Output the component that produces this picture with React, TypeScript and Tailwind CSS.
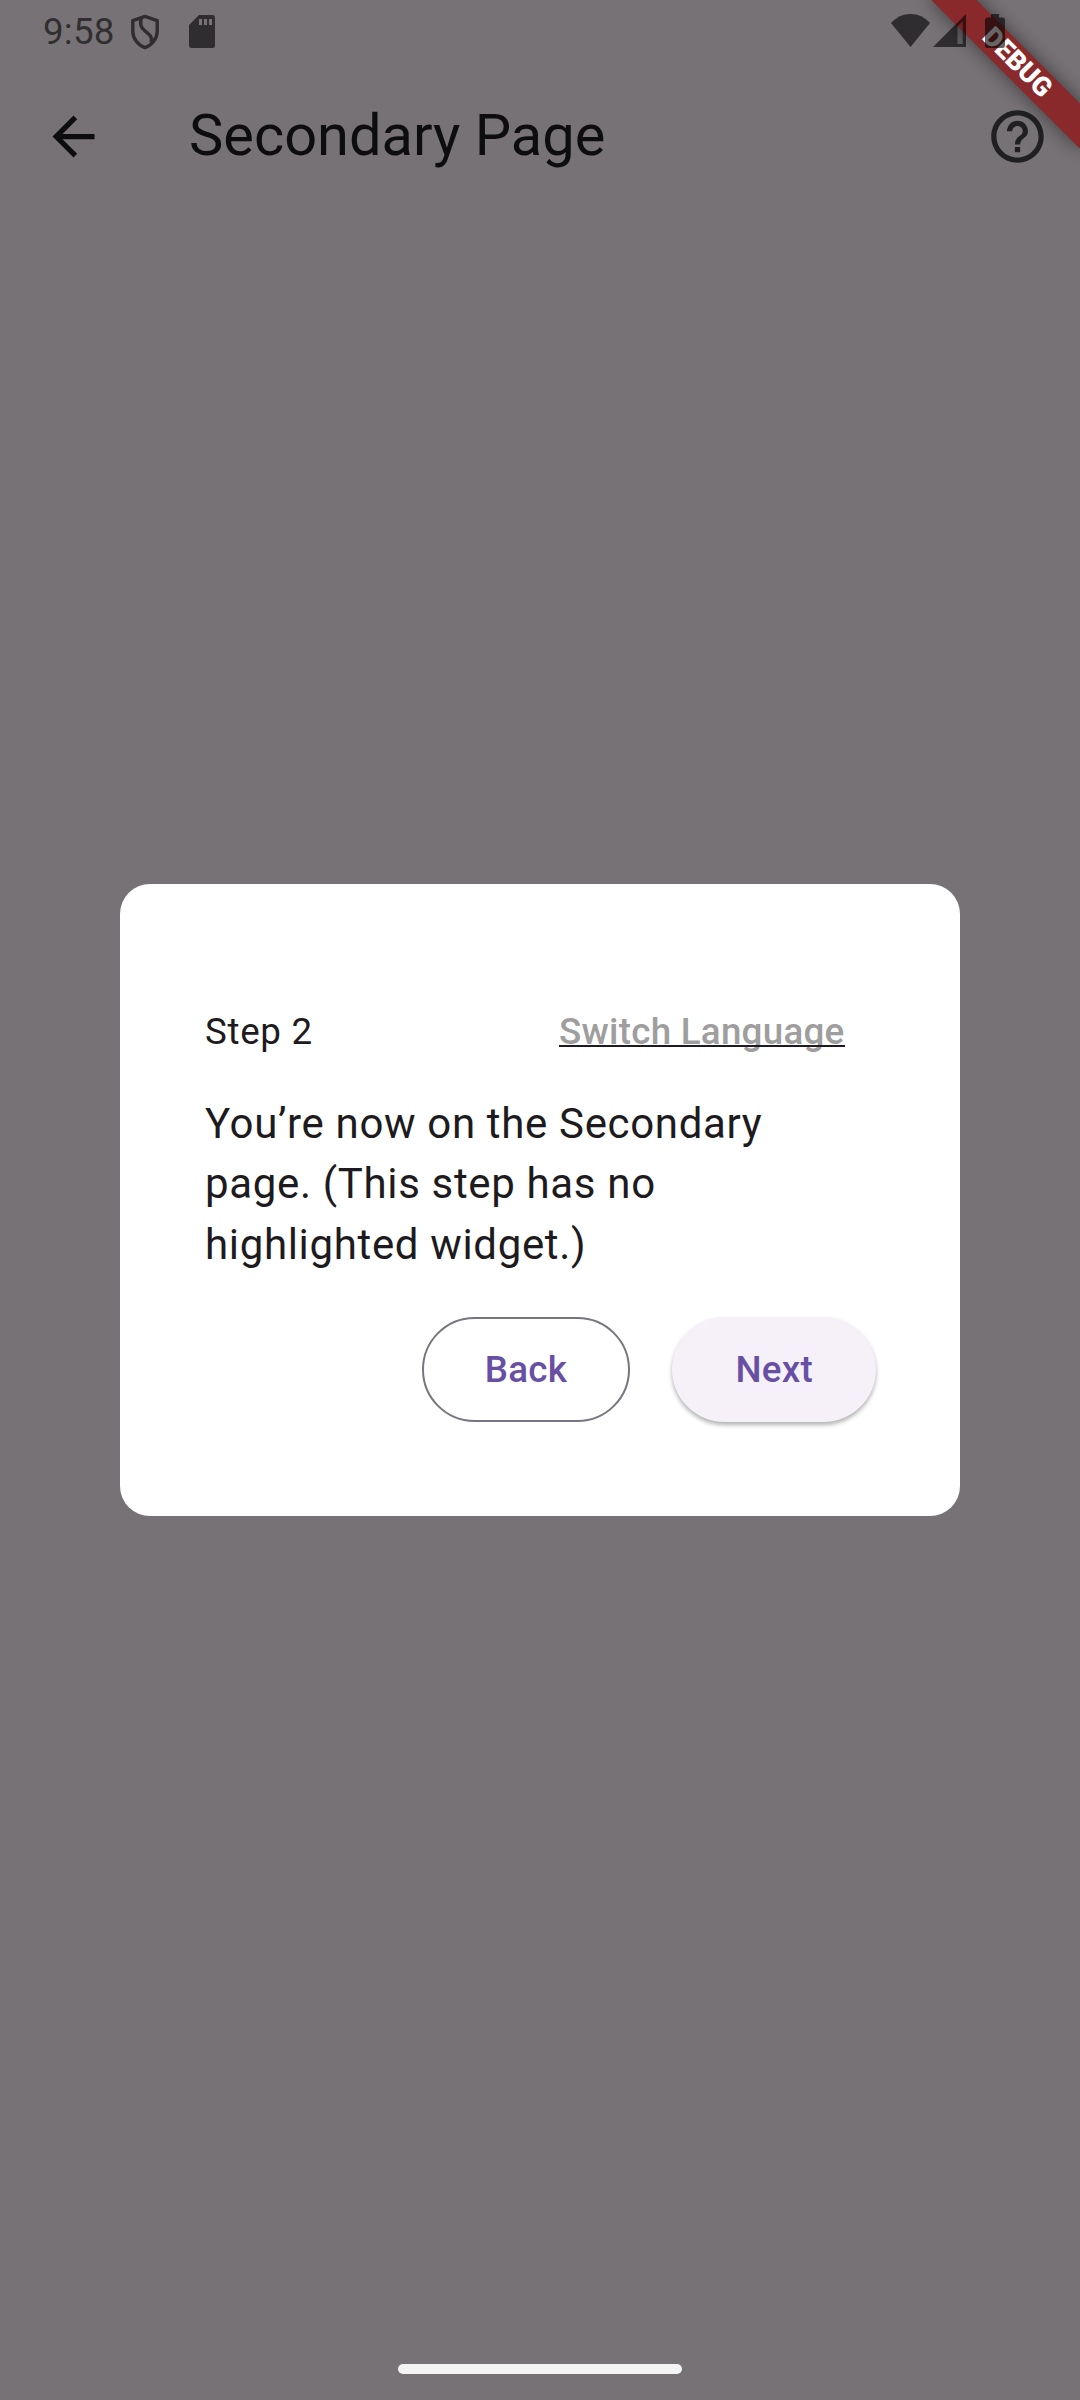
import type { ReactNode } from 'react'

function Glyph({ box, className, children }: { box: string; className: string; children: ReactNode }) {
  return (
    <svg viewBox={box} className={className} fill="currentColor" aria-hidden="true">
      {children}
    </svg>
  )
}

function StatusBar() {
  return (
    <div className="relative z-20 flex h-[63px] items-start text-black/60">
      <span className="ml-[43px] mt-[10px] w-[74px] text-[36.75px] leading-[43px] tracking-[0.2px]">9:58</span>
      <Glyph box="0 0 30 36" className="ml-[12.5px] mt-[13.5px] h-[36px] w-[30px] text-black opacity-60">
        <path
          d="M15 2.400 27.200 6.600V17c0 7.800-5.200 14.200-12.200 16.600C8 31.200 2.800 24.800 2.800 17V6.600Z"
          fill="none"
          stroke="currentColor"
          strokeWidth="3.4"
          strokeLinejoin="round"
        />
        <path
          d="M11.500 3.500C9.400 9.500 10.500 13.500 15 17c5 4 7.600 6 6.200 11.500"
          fill="none"
          stroke="currentColor"
          strokeWidth="3.4"
        />
      </Glyph>
      <Glyph box="0 0 26 33" className="ml-[29.500px] mt-[15px] h-[33px] w-[26px]">
        <path
          fillRule="evenodd"
          d="M10 0H23.500Q26 0 26 2.500V30.500Q26 33 23.500 33H2.500Q0 33 0 30.500V10ZM10 4V10H13V4ZM15 4V10H18V4ZM20 4V10H23V4Z"
        />
      </Glyph>
      <div className="ml-auto mr-[75px] flex items-start">
        <Glyph box="0 0 39 33" className="mt-[14px] h-[33px] w-[39px]">
          <path d="M0 9C5 3.300 12 0 19.500 0S34 3.300 39 9L19.500 33Z" />
        </Glyph>
        <Glyph box="0 0 33 33" className="ml-[3px] mt-[14px] h-[33px] w-[33px]">
          <path fillRule="evenodd" d="M33 0V33H0ZM24.500 12.500V30H29.700V7.300Z" />
          <path fillOpacity="0.25" d="M24.500 12.500V30H29.700V7.300Z" />
        </Glyph>
        <Glyph box="0 0 20 34" className="ml-[19px] mt-[14px] h-[34px] w-[20px]">
          <path d="M6 0H14V3.500H17.500Q20 3.500 20 6V31.500Q20 34 17.500 34H2.500Q0 34 0 31.500V6Q0 3.500 2.500 3.500H6Z" />
        </Glyph>
      </div>
    </div>
  )
}

function AppBar() {
  return (
    <header className="flex h-[147px] items-center">
      <Glyph box="0 0 24 24" className="ml-[42px] size-[63px] text-[#0d0d0f]">
        <path d="M20 11H7.830l5.590-5.590L12 4l-8 8 8 8 1.410-1.410L7.830 13H20v-2z" />
      </Glyph>
      <h1 className="mb-[2px] ml-[84px] text-[57.750px] leading-[73px] text-[#0d0d0f]">Secondary Page</h1>
      <Glyph box="0 0 24 24" className="ml-auto mr-[31.500px] size-[63px] text-[#202023]">
        <path d="M11 18h2v-2h-2v2zm1-16C6.480 2 2 6.480 2 12s4.480 10 10 10 10-4.480 10-10S17.520 2 12 2zm0 18c-4.410 0-8-3.590-8-8s3.590-8 8-8 8 3.590 8 8-3.590 8-8 8zm0-14c-2.210 0-4 1.790-4 4h2c0-1.100.9-2 2-2s2 .9 2 2c0 2-3 1.750-3 5h2c0-2.250 3-2.500 3-5 0-2.210-1.790-4-4-4z" />
      </Glyph>
    </header>
  )
}

function DebugBanner() {
  return (
    <div className="absolute right-0 top-0 z-10 size-[240px] overflow-hidden">
      <div className="absolute left-[71.900px] top-[47.350px] h-[31.500px] w-[210px] rotate-45">
        <div className="absolute inset-0 bg-black/50 blur-[9.600px]" />
        <div className="absolute -inset-x-5 inset-y-0 flex items-center justify-center bg-[#8a292c]">
          <span className="text-[26.780px] font-black leading-none text-white">DEBUG</span>
        </div>
      </div>
    </div>
  )
}

function StepDialog() {
  return (
    <section className="mx-[120px] mt-[674px] h-[632px] rounded-[30px] bg-white p-[84px] text-[#1d1b20]">
      <div className="flex h-[126px] items-center justify-between pr-[31.500px]">
        <span className="ml-px mt-px text-[36.750px] tracking-[0.660px]">Step 2</span>
        <button className="relative mt-px text-[36.750px] font-medium tracking-[0.260px] text-[#9e9e9e]">
          <span className="relative">Switch Language</span>
          <span className="absolute inset-x-0 bottom-[12px] h-[2px] bg-[#1d1b20]" />
        </button>
      </div>
      <p className="ml-px text-[42px] leading-[60.300px] tracking-[0.660px]">
        You’re now on the Secondary page. (This step has no highlighted widget.)
      </p>
      <div className="mt-[42px] flex justify-end gap-[42px] text-[36.750px] font-medium tracking-[0.260px] text-[#6750a4]">
        <button className="h-[105px] w-[208px] rounded-full border-2 border-[#79747e] pl-px">Back</button>
        <button className="h-[105px] w-[204.500px] rounded-full bg-[#f6f1f9] pl-px shadow-[0_3px_4px_rgba(0,0,0,0.3)]">
          Next
        </button>
      </div>
    </section>
  )
}

export default function App() {
  return (
    <main className="relative flex h-[2400px] w-[1080px] flex-col overflow-hidden bg-[#777276] font-['Roboto',sans-serif]">
      <StatusBar />
      <AppBar />
      <DebugBanner />
      <StepDialog />
      <div className="mx-auto mb-[26px] mt-auto h-[10px] w-[284px] rounded-full bg-[#f4f4f4]" />
    </main>
  )
}
